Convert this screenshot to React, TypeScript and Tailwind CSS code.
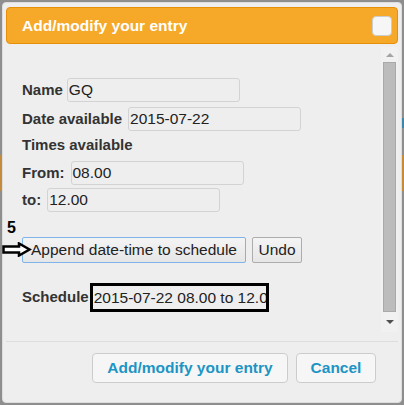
import React from "react";

const font = { fontFamily: '"Liberation Sans", Arial, sans-serif' };

function Field({ label, value, gap = 6 }: { label: string; value: string; gap?: number }) {
  return (
    <div className={gap === 4 ? "flex items-center gap-[4px] h-[24px]" : "flex items-center gap-[6px] h-[24px]"}>
      <span className="font-bold text-[15px] text-[#333333]">{label}</span>
      <div className="w-[173px] h-[24px] border border-[#d3d3d3] rounded-[3px] pl-[1px] flex items-center text-[15.5px] text-[#222222]">
        {value}
      </div>
    </div>
  );
}

export default function App() {
  return (
    <div
      className="relative w-[404px] h-[405px] bg-[#8e8e8e] p-[2px] overflow-hidden"
      style={font}
    >
      {/* page behind the dialog peeking at the edges */}
      <div className="absolute left-0 top-[155px] w-[2px] h-[36px] bg-[#c48b3a]" />
      <div className="absolute right-0 top-[118px] w-[2px] h-[10px] bg-[#3f86a8]" />
      <div className="absolute right-0 top-[155px] w-[2px] h-[36px] bg-[#c48b3a]" />

      <div className="w-[400px] h-[401px] bg-[#eeeeee] border border-[#dddddd] rounded-[4px] px-[3px] pt-[4px] flex flex-col">
        {/* title bar */}
        <div className="h-[37px] bg-[#f6a828] border border-[#e78f08] rounded-[4px] flex items-center justify-between pl-[15px] pr-[5px]">
          <span className="text-white font-bold text-[15.5px]">Add/modify your entry</span>
          <div className="w-[20px] h-[20px] bg-[#f6f6f6] border border-[#cccccc] rounded-[4px]" />
        </div>

        {/* content + scrollbar */}
        <div className="flex h-[290px]">
          <div className="relative flex-1 pl-[16px] pt-[34px] flex flex-col">
            <Field label="Name" value="GQ" gap={4} />
            <div className="mt-[5px]">
              <Field label="Date available" value="2015-07-22" />
            </div>
            <div className="mt-[2px] h-[24px] flex items-center font-bold text-[15px] text-[#333333]">
              Times available
            </div>
            <div className="mt-[4px]">
              <Field label="From:" value="08.00" />
            </div>
            <div className="mt-[3px]">
              <Field label="to:" value="12.00" />
            </div>

            <div className="mt-[25px] flex items-center gap-[6px]">
              <button className="w-[224px] h-[26px] border border-[#7eb4ea] rounded-[2px] bg-gradient-to-b from-[#f4f4f4] to-[#e6e6e6] text-[15.5px] text-[#222222] flex items-center justify-center">
                Append date-time to schedule
              </button>
              <button className="w-[50px] h-[26px] border border-[#adadad] rounded-[2px] bg-gradient-to-b from-[#f4f4f4] to-[#e6e6e6] text-[15.5px] text-[#222222] flex items-center justify-center">
                Undo
              </button>
            </div>

            <div className="mt-[20px] flex items-center gap-[1px]">
              <span className="font-bold text-[15px] text-[#333333]">Schedule</span>
              <div className="w-[179px] h-[29px] border-[3px] border-black pl-[1px] flex items-center text-[15.5px] text-[#222222] whitespace-nowrap overflow-hidden">
                2015-07-22 08.00 to 12.0
              </div>
            </div>

            {/* annotations drawn over the screenshot */}
            <span className="absolute left-[1px] top-[176px] font-bold text-[16px] leading-none text-black">5</span>
            <svg
              className="absolute left-[-4px] top-[198px]"
              width="30"
              height="15"
              viewBox="0 0 30 15"
            >
              <polygon
                points="1.5,4.5 17,4.5 17,1.5 27.5,7.5 17,13.5 17,10.5 1.5,10.5"
                fill="#ffffff"
                stroke="#000000"
                strokeWidth="2.5"
                strokeLinejoin="miter"
              />
            </svg>
          </div>

          {/* scrollbar */}
          <div className="w-[17px] mt-[3px] mb-[2px] bg-[#f1f1f1] flex flex-col items-center">
            <div className="h-[15px] flex items-center justify-center">
              <div className="w-0 h-0 border-l-[4px] border-r-[4px] border-b-[4px] border-l-transparent border-r-transparent border-b-[#a3a3a3]" />
            </div>
            <div className="w-[13px] h-[250px] bg-[#bcbcbc] border border-[#a9a9a9]" />
            <div className="flex-1 flex items-center justify-center">
              <div className="w-0 h-0 border-l-[4px] border-r-[4px] border-t-[4px] border-l-transparent border-r-transparent border-t-[#505050]" />
            </div>
          </div>
        </div>

        {/* button pane */}
        <div className="mt-[7px] border-t border-[#dddddd] pt-[11px] flex justify-end gap-[8px] pr-[22px]">
          <button className="w-[196px] h-[30px] bg-[#f6f6f6] border border-[#cccccc] rounded-[4px] text-[#1c94c4] font-bold text-[15.5px]">
            Add/modify your entry
          </button>
          <button className="w-[80px] h-[30px] bg-[#f6f6f6] border border-[#cccccc] rounded-[4px] text-[#1c94c4] font-bold text-[15.5px]">
            Cancel
          </button>
        </div>
      </div>
    </div>
  );
}
